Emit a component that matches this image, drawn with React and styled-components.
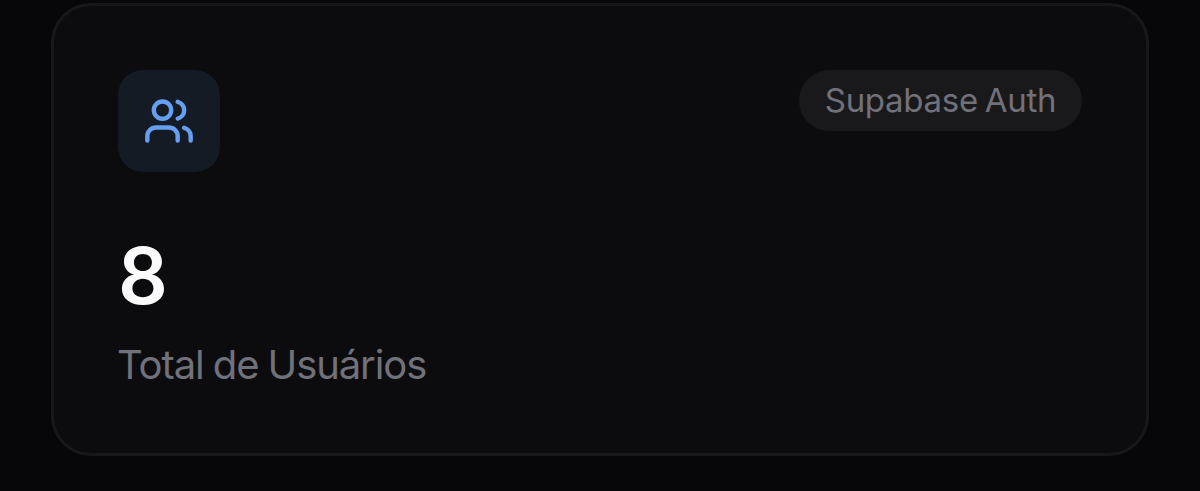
import React from "react";
import styled, { createGlobalStyle } from "styled-components";
import { Users } from "lucide-react";

const GlobalStyle = createGlobalStyle`
  * {
    box-sizing: border-box;
  }
  body {
    margin: 0;
    background-color: #070709;
    font-family: "Inter", sans-serif;
  }
`;

const Page = styled.main`
  height: 491px;
  padding: 3px 51px 0;
`;

const Card = styled.section`
  height: 453px;
  padding: 64px;
  border: 3px solid #18181a;
  border-radius: 40px;
  background-color: #0c0c0e;
`;

const CardHeader = styled.div`
  display: flex;
  justify-content: space-between;
  align-items: flex-start;
`;

const IconBox = styled.div`
  display: flex;
  align-items: center;
  justify-content: center;
  width: 102px;
  height: 102px;
  padding-bottom: 1px;
  border-radius: 25px;
  background-color: #141b24;
  color: #669ff0;
`;

const Badge = styled.span`
  display: flex;
  align-items: center;
  justify-content: center;
  width: 283px;
  height: 61px;
  padding-bottom: 2px;
  border-radius: 31px;
  background-color: #19191b;
  color: #71717a;
  font-size: 33px;
  letter-spacing: -0.3px;
  word-spacing: -2px;
  white-space: nowrap;
`;

const Value = styled.p`
  margin: 64px 0 0;
  color: #fafafa;
  font-size: 78px;
  font-weight: 600;
  line-height: 80px;
`;

const Label = styled.p`
  margin: 22px 0 0;
  color: #71717a;
  font-size: 40px;
  letter-spacing: -1.1px;
  word-spacing: -1px;
  line-height: 53px;
  text-indent: -1px;
`;

function App() {
  return (
    <>
      <GlobalStyle />
      <Page>
        <Card>
          <CardHeader>
            <IconBox>
              <Users size={52} strokeWidth={2.05} />
            </IconBox>
            <Badge>Supabase Auth</Badge>
          </CardHeader>
          <Value>8</Value>
          <Label>Total de Usuários</Label>
        </Card>
      </Page>
    </>
  );
}

export default App;
